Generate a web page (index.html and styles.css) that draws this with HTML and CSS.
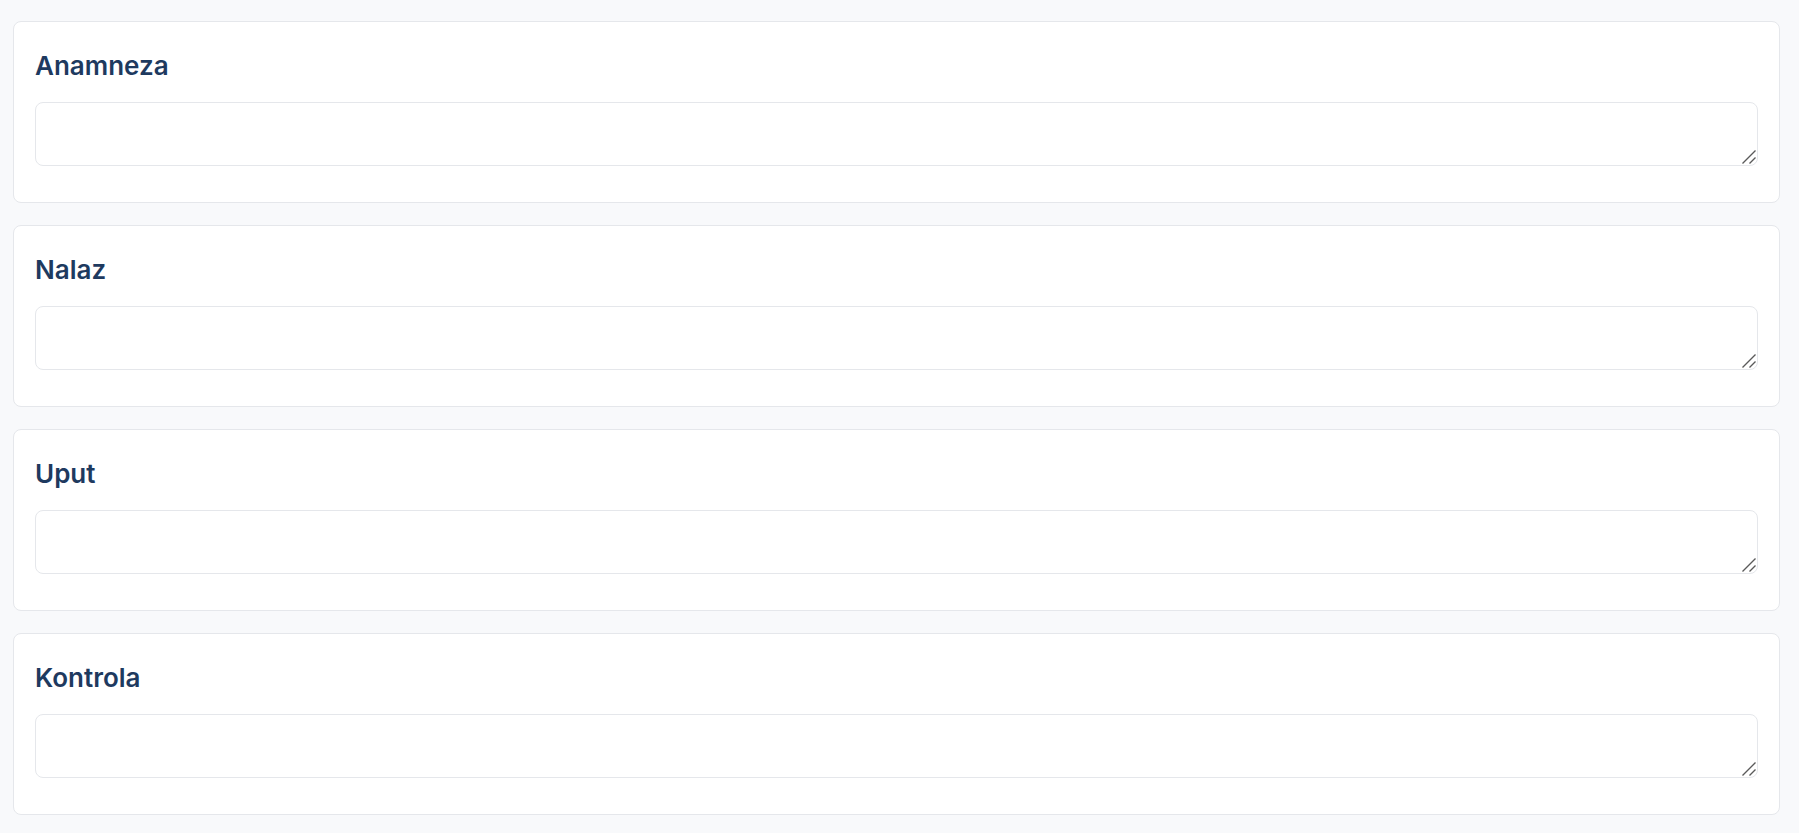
FILE: index.html
```html
<!DOCTYPE html>
<html lang="hr">
<head>
<meta charset="utf-8">
<title>Pregled</title>
<link rel="stylesheet" href="styles.css">
</head>
<body>
<main class="page">
  <section class="card">
    <h2 class="card-title">Anamneza</h2>
    <div class="field-wrap">
      <textarea class="field"></textarea>
      <svg class="grip" width="16" height="16" viewBox="0 0 16 16" aria-hidden="true"><path d="M2.5 15.5 L15.5 2.5 M9.5 15.5 L15.5 9.5"/></svg>
    </div>
  </section>
  <section class="card">
    <h2 class="card-title">Nalaz</h2>
    <div class="field-wrap">
      <textarea class="field"></textarea>
      <svg class="grip" width="16" height="16" viewBox="0 0 16 16" aria-hidden="true"><path d="M2.5 15.5 L15.5 2.5 M9.5 15.5 L15.5 9.5"/></svg>
    </div>
  </section>
  <section class="card">
    <h2 class="card-title">Uput</h2>
    <div class="field-wrap">
      <textarea class="field"></textarea>
      <svg class="grip" width="16" height="16" viewBox="0 0 16 16" aria-hidden="true"><path d="M2.5 15.5 L15.5 2.5 M9.5 15.5 L15.5 9.5"/></svg>
    </div>
  </section>
  <section class="card">
    <h2 class="card-title">Kontrola</h2>
    <div class="field-wrap">
      <textarea class="field"></textarea>
      <svg class="grip" width="16" height="16" viewBox="0 0 16 16" aria-hidden="true"><path d="M2.5 15.5 L15.5 2.5 M9.5 15.5 L15.5 9.5"/></svg>
    </div>
  </section>
</main>
</body>
</html>
```

FILE: styles.css
```css
* { box-sizing: border-box; }
html, body {
  margin: 0;
  background: #f8f9fb;
  font-family: Inter, "Noto Sans", sans-serif;
}
.page {
  display: flex;
  flex-direction: column;
  gap: 22px;
  padding: 21px 19px 0 13px;
}
.card {
  background: #ffffff;
  border: 1px solid #e5e7eb;
  border-radius: 8px;
  padding: 28px 21px 21px;
}
.card-title {
  margin: 0 0 20px;
  font-size: 26px;
  line-height: 32px;
  font-weight: 600;
  color: #1e3a5f;
}
.field-wrap {
  position: relative;
  margin: 0 0 15px;
}
.field {
  display: block;
  width: 100%;
  height: 64px;
  margin: 0;
  border: 1px solid #e5e7eb;
  border-radius: 8px;
  background: #fff;
  resize: vertical;
  font-family: inherit;
  font-size: 14px;
  padding: 8px 12px;
  outline: none;
}
.field::-webkit-resizer {
  background: transparent;
}
.grip {
  position: absolute;
  right: 2px;
  bottom: 2px;
  pointer-events: none;
  fill: none;
  stroke: #5a5a5a;
  stroke-width: 1.4;
}
```
